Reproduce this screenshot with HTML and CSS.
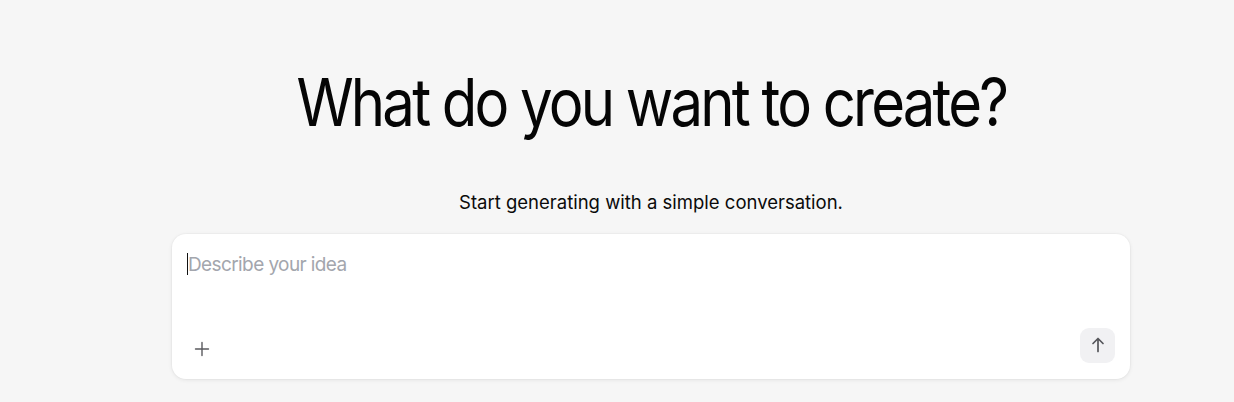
FILE: index.html
```html
<!DOCTYPE html>
<html lang="en">
<head>
<meta charset="utf-8">
<title>Create</title>
<link rel="stylesheet" href="styles.css">
</head>
<body>
<div class="app">
  <aside class="sidebar"></aside>
  <main class="main">
    <h1 class="title">What do you want to create?</h1>
    <p class="subtitle">Start generating with a simple conversation.</p>
    <div class="composer">
      <div class="input"><span class="caret"></span><span class="placeholder">Describe your idea</span></div>
      <div class="toolbar">
        <button class="icon-btn plus" aria-label="Add">
          <svg width="18" height="18" viewBox="0 0 18 18" fill="none" stroke="#5a5a5e" stroke-width="1.4" stroke-linecap="round"><path d="M9 2.5v13M2.5 9h13"/></svg>
        </button>
        <button class="send" aria-label="Send">
          <svg width="18" height="18" viewBox="0 0 18 18" fill="none" stroke="#55565a" stroke-width="1.7" stroke-linecap="round" stroke-linejoin="round"><path d="M9 15.5V2.5M4 7.5l5-5 5 5"/></svg>
        </button>
      </div>
    </div>
  </main>
</div>
</body>
</html>
```
FILE: styles.css
```css
* { box-sizing: border-box; }
html, body { margin: 0; padding: 0; }
body {
  background: #f6f6f6;
  font-family: Inter, "Noto Sans", sans-serif;
  color: #0a0a0a;
  height: 402px;
  overflow: hidden;
}
.app { display: flex; height: 402px; }
.sidebar { width: 68px; flex: none; }
.main {
  flex: 1;
  display: flex;
  flex-direction: column;
  align-items: center;
  padding-top: 62px;
}
.title {
  margin: 0;
  font-size: 66px;
  font-weight: 400;
  color: #050505;
  letter-spacing: -3.2px;
  line-height: 80px;
  transform: scaleX(0.88);
  transform-origin: center;
  white-space: nowrap;
}
.subtitle {
  margin: 48px 0 0;
  font-size: 18.5px;
  letter-spacing: 0;
  line-height: 24px;
}
.composer {
  margin-top: 20px;
  width: 958px;
  height: 145px;
  background: #fff;
  border-radius: 14px;
  box-shadow: 0 1px 4px rgba(0,0,0,0.08), 0 0 0 1px rgba(0,0,0,0.02);
  display: flex;
  flex-direction: column;
  justify-content: space-between;
  padding: 18px 15px 15px 15px;
}
.input {
  display: flex;
  align-items: center;
  height: 24px;
  font-size: 19px;
  letter-spacing: -0.6px;
}
.caret { width: 1px; height: 22px; background: #111; }
.placeholder { color: #a3a6ad; }
.toolbar {
  display: flex;
  justify-content: space-between;
  align-items: center;
}
.icon-btn {
  border: 0;
  background: transparent;
  padding: 0;
  width: 30px;
  height: 30px;
  display: flex;
  align-items: center;
  justify-content: center;
  margin-top: 8px;
}
.send {
  border: 0;
  width: 35px;
  height: 35px;
  border-radius: 9px;
  background: #f1f1f3;
  display: flex;
  align-items: center;
  justify-content: center;
  padding: 0;
}
```
